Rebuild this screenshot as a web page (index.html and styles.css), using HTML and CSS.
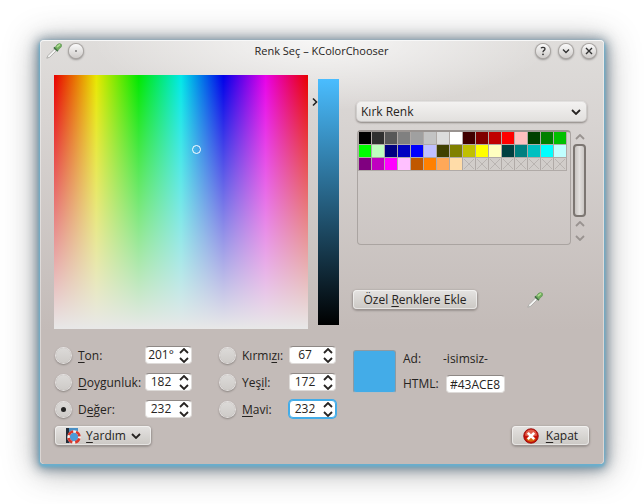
FILE: index.html
```html
<!DOCTYPE html>
<html lang="tr">
<head>
<meta charset="utf-8">
<title>Renk Seç – KColorChooser</title>
<link rel="stylesheet" href="styles.css">
</head>
<body>
<svg class="defs" width="0" height="0" aria-hidden="true">
  <symbol id="picker" viewBox="0 0 16 16">
    <path d="M.8 15.200 2 12.500 8.500 6l1.800 1.800L3.800 14.200z" fill="#f4f4f3" stroke="#a3a3a0" stroke-width=".8"/>
    <path d="M7.300 4.900 8.600 3.700 12.500 7.500 11.400 8.700z" fill="#3d6b40"/>
    <path d="M9 4.500 11 1.800Q13.500-.4 15.300 1.200 16.600 3 14.300 5L11.800 7.200z" fill="#72ad5f" stroke="#558f4b" stroke-width=".5"/>
    <path d="M11.300 3.700 13.600 1.900" stroke="#b0df91" stroke-width="1.500" stroke-linecap="round"/>
  </symbol>
  <symbol id="down" viewBox="0 0 10 6">
    <path d="M1 1l4 4 4-4" fill="none" stroke="currentColor" stroke-width="1.800"/>
  </symbol>
  <symbol id="up" viewBox="0 0 10 6">
    <path d="M1 5l4-4 4 4" fill="none" stroke="currentColor" stroke-width="1.800"/>
  </symbol>
</svg>
<main class="window">
  <header class="titlebar">
    <div class="tools">
      <svg class="icon" aria-hidden="true"><use href="#picker"/></svg>
      <button class="round" aria-label="Masaüstü"><svg viewBox="0 0 14 14"><circle cx="7" cy="7" r=".8" fill="#333"/></svg></button>
    </div>
    <h1 class="title">Renk Seç – KColorChooser</h1>
    <div class="tools tools-end">
      <button class="round" aria-label="Yardım"><svg viewBox="0 0 14 14"><path d="M5 4.300Q5.500 3.300 7 3.300q2 0 2 1.600 0 .9-1.200 1.700-.8.600-.8 1.700" fill="none" stroke="#333" stroke-width="1.300"/><circle cx="7" cy="10.300" r=".9" fill="#333"/></svg></button>
      <button class="round" aria-label="Küçült"><svg viewBox="0 0 14 14"><path d="M4 5.500 7 8.500l3-3" fill="none" stroke="#333" stroke-width="1.400"/></svg></button>
      <button class="round" aria-label="Pencereyi kapat"><svg viewBox="0 0 14 14"><path d="M4 4l6 6m0-6-6 6" stroke="#333" stroke-width="1.400"/></svg></button>
    </div>
  </header>

  <section class="upper">
    <div class="spectrum"><span class="marker"></span></div>
    <div class="value">
      <svg class="pointer" viewBox="0 0 6 10" aria-hidden="true"><path d="M1 1.500l3.500 3.500L1 8.500" fill="none" stroke="#222" stroke-width="1.600"/></svg>
      <div class="value-bar"></div>
    </div>
    <div class="palette">
      <div class="combo">
        <select aria-label="Palet"><option>Kırk Renk</option></select>
        <svg class="chevron" aria-hidden="true"><use href="#down"/></svg>
      </div>
      <div class="list">
        <div class="frame"><div class="cells" id="cells"></div></div>
        <div class="scroll">
          <button aria-label="Yukarı"><svg class="chevron"><use href="#up"/></svg></button>
          <div class="thumb"></div>
          <button aria-label="Yukarı"><svg class="chevron"><use href="#up"/></svg></button>
          <button aria-label="Aşağı"><svg class="chevron"><use href="#down"/></svg></button>
        </div>
      </div>
      <div class="actions">
        <button class="push add"><span>Özel <u>R</u>enklere Ekle</span></button>
        <button class="pick" aria-label="Renk seç"><svg class="icon"><use href="#picker"/></svg></button>
      </div>
    </div>
  </section>

  <section class="lower">
    <div class="channels hsv">
      <input type="radio" name="mode" id="r-h"><label for="r-h"><u>T</u>on:</label>
      <div class="spin"><input type="text" value="201°" aria-label="Ton"><span class="steps"><button aria-label="Artır"><svg class="chevron"><use href="#up"/></svg></button><button aria-label="Azalt"><svg class="chevron"><use href="#down"/></svg></button></span></div>
      <input type="radio" name="mode" id="r-s"><label for="r-s"><u>D</u>oygunluk:</label>
      <div class="spin"><input type="text" value="182" aria-label="Doygunluk"><span class="steps"><button aria-label="Artır"><svg class="chevron"><use href="#up"/></svg></button><button aria-label="Azalt"><svg class="chevron"><use href="#down"/></svg></button></span></div>
      <input type="radio" name="mode" id="r-v" checked><label for="r-v">D<u>e</u>ğer:</label>
      <div class="spin"><input type="text" value="232" aria-label="Değer"><span class="steps"><button aria-label="Artır"><svg class="chevron"><use href="#up"/></svg></button><button aria-label="Azalt"><svg class="chevron"><use href="#down"/></svg></button></span></div>
    </div>
    <div class="channels rgb">
      <input type="radio" name="mode" id="r-r"><label for="r-r">Kırmı<u>z</u>ı:</label>
      <div class="spin"><input type="text" value="67" aria-label="Kırmızı"><span class="steps"><button aria-label="Artır"><svg class="chevron"><use href="#up"/></svg></button><button aria-label="Azalt"><svg class="chevron"><use href="#down"/></svg></button></span></div>
      <input type="radio" name="mode" id="r-g"><label for="r-g">Yeş<u>i</u>l:</label>
      <div class="spin"><input type="text" value="172" aria-label="Yeşil"><span class="steps"><button aria-label="Artır"><svg class="chevron"><use href="#up"/></svg></button><button aria-label="Azalt"><svg class="chevron"><use href="#down"/></svg></button></span></div>
      <input type="radio" name="mode" id="r-b"><label for="r-b"><u>M</u>avi:</label>
      <div class="spin active"><input type="text" value="232" aria-label="Mavi"><span class="steps"><button aria-label="Artır"><svg class="chevron"><use href="#up"/></svg></button><button aria-label="Azalt"><svg class="chevron"><use href="#down"/></svg></button></span></div>
    </div>
    <div class="current">
      <div class="swatch"></div>
      <div class="details">
        <span>Ad:</span><span>-isimsiz-</span>
        <label for="html">HTML:</label><input class="hex" id="html" type="text" value="#43ACE8">
      </div>
    </div>
  </section>

  <footer class="footer">
    <button class="push help">
      <svg class="icon" viewBox="0 0 16 16" aria-hidden="true"><path d="M1 0h12v15H1z" fill="#4a8fc4"/><path d="M1 0h3v15H1z" fill="#222c38"/><circle cx="9" cy="9" r="5.500" fill="#4d9bd8" stroke="#f8f1ef" stroke-width="2.600"/><circle cx="9" cy="9" r="5.500" fill="none" stroke="#d8382c" stroke-width="2.600" stroke-dasharray="5.640 3" stroke-dashoffset="-1.500"/></svg>
      <span><u>Y</u>ardım</span>
      <svg class="chevron" aria-hidden="true"><use href="#down"/></svg>
    </button>
    <button class="push close">
      <svg class="icon" viewBox="0 0 16 16" aria-hidden="true"><circle cx="8" cy="8" r="7.300" fill="#c80f08" stroke="#8e0906" stroke-width=".8"/><path d="M2 7.500a6 6 0 0 1 12 0Q8 9.500 2 7.500z" fill="#e0604c"/><path d="M3 10.500a5.500 5.500 0 0 0 10 0Q8 8.500 3 10.500z" fill="#d86a12"/><path d="M4.800 4.800l6.400 6.400m0-6.400-6.400 6.400" stroke="#fff" stroke-width="2.600"/></svg>
      <span><u>K</u>apat</span>
    </button>
  </footer>
</main>
<script src="script.js"></script>
</body>
</html>
```

FILE: styles.css
```css
* { box-sizing: border-box; }
body {
  margin: 0;
  padding: 40px;
  background: #fff;
  color: #262321;
  font: 12px/16px "Open Sans", "Noto Sans", sans-serif;
}
button, input, select { font: inherit; color: inherit; margin: 0; }
button { padding: 0; border: 0; background: none; }
u { text-decoration-thickness: 1px; text-underline-offset: 2px; text-decoration-skip-ink: none; }
.defs { position: absolute; }
.icon { width: 16px; height: 16px; flex: none; }
.chevron { width: 10px; height: 6px; flex: none; display: block; }

.window {
  padding: 0 14px 19px;
  border-radius: 4px;
  background:
    radial-gradient(ellipse 230px 70px at 50% 0, rgba(255,255,255,.75), rgba(255,255,255,0)) no-repeat,
    linear-gradient(#dfdddb, #d8d4d2 80px, #c3bbb8 290px);
  box-shadow:
    inset 0 1px #f8f8f8,
    inset 1px 0 rgba(255,255,255,.4),
    inset -1px 0 rgba(255,255,255,.4),
    0 2px 3px 1px #69b0cf,
    0 2px 12px 3px rgba(40,75,100,.6),
    0 4px 32px 4px rgba(60,60,60,.4);
}
.titlebar {
  display: grid;
  grid-template-columns: 1fr auto 1fr;
  align-items: center;
  height: 22px;
  margin: 0 -7px 13px -8px;
}
.tools { display: flex; gap: 7px; align-items: center; }
.tools-end { justify-content: flex-end; gap: 9px; }
.title { margin: 0; font-size: 11px; font-weight: 400; }
.round {
  width: 14px;
  height: 14px;
  border-radius: 50%;
  background: linear-gradient(#fafafa, #cfccca);
  box-shadow: 0 0 0 1px #aaa6a3, 0 1px 2px 1px rgba(0,0,0,.3);
}
.tools-end .round:last-child { margin-right: 1px; }
.round svg { display: block; width: 14px; height: 14px; }

.upper { display: flex; }
.spectrum {
  position: relative;
  width: 254px;
  height: 254px;
  background:
    linear-gradient(rgba(232,232,232,0), #e8e8e8),
    linear-gradient(90deg, #e80000, #e8e800, #00e800, #00e8e8, #0000e8, #e800e8, #e80000);
}
.marker {
  position: absolute;
  left: 138px;
  top: 70px;
  width: 9px;
  height: 9px;
  border: 1px solid #fff;
  border-radius: 50%;
}
.value { display: flex; margin: 4px 14px 4px 4px; }
.pointer { width: 6px; height: 10px; margin-top: 18px; }
.value-bar { width: 21px; background: linear-gradient(#4abdff, #000); }
.palette { flex: 1; min-width: 0; padding-top: 27px; }
.combo { position: relative; margin: 0 4px 9px; }
.combo select {
  display: block;
  width: 100%;
  height: 19px;
  padding: 0 4px;
  appearance: none;
  border: 0;
  border-radius: 4px;
  background: linear-gradient(#f3f2f1, #e2e0de);
  box-shadow: 0 0 0 1px rgba(255,255,255,.5), 0 1px 2px 1px #8b8582;
}
.combo .chevron { position: absolute; right: 5px; top: 7px; pointer-events: none; }
.list { display: flex; gap: 1px; height: 115px; margin: 0 3px 0 4px; }
.frame {
  flex: 1;
  border: 1px solid #aaa4a1;
  border-top: 2px solid #999390;
  border-radius: 4px;
}
.cells {
  display: grid;
  grid-template-columns: repeat(16, 12px);
  grid-auto-rows: 12px;
  gap: 1px;
  width: max-content;
  padding: 0 1px 1px;
  background: #b0aaa7;
}
.cell { display: block; }
.empty { background: #d1cdca; color: #b9b4b1; }
.empty svg { display: block; width: 12px; height: 12px; }
.scroll { width: 15px; display: flex; flex-direction: column; align-items: center; color: #999390; }
.scroll button { height: 14px; flex: none; }
.thumb {
  flex: 1;
  width: 13px;
  border: 2px solid #7c7672;
  border-radius: 4px;
  background: linear-gradient(90deg, #c8c4c1, #e2dfdd, #cbc7c4);
}
.actions { display: flex; align-items: center; margin-top: 45px; gap: 50px; }
.pick { height: 16px; }
.push {
  display: flex;
  align-items: center;
  justify-content: center;
  gap: 5px;
  height: 19px;
  border-radius: 4px;
  background: linear-gradient(#e5e3e1, #cbc8c4);
  box-shadow: inset 0 0 0 1px rgba(255,255,255,.5), 0 1px 2px 1px #9a9390;
}
.push span { padding-top: 1px; }
.add { width: 124px; }

.lower { display: flex; align-items: flex-start; margin-top: 17px; }
.channels {
  display: grid;
  grid-template-columns: 17px 61px 47px;
  grid-auto-rows: 18px;
  gap: 9px 6px;
  align-items: center;
}
.rgb { grid-template-columns: 17px 41px 47px; margin-left: 27px; }
.hsv { padding-left: 1px; }
.channels input[type="radio"] {
  display: grid;
  place-items: center;
  justify-self: center;
  appearance: none;
  width: 15px;
  height: 15px;
  border-radius: 50%;
  background: linear-gradient(#dcdad8, #cecbc8);
  box-shadow: 0 0 0 1px #e4e1e0, 0 1px 2px 1px #8a8380;
}
.channels input[type="radio"]:checked::before {
  content: "";
  width: 5px;
  height: 5px;
  border-radius: 50%;
  background: #222;
}
.channels label { white-space: nowrap; padding-top: 1px; }
.spin, .hex {
  height: 18px;
  border: 1px solid #dedbd9;
  border-top-color: #8e8885;
  border-radius: 4px;
  background: #fff;
}
.spin { display: flex; align-items: center; }
.spin input { width: 30px; height: 16px; padding: 0; border: 0; background: none; text-align: center; outline: 0; }
.active { border-color: #43ace8; box-shadow: 0 0 0 1px #43ace8; }
.steps { display: flex; flex-direction: column; gap: 3px; margin-left: 3px; }
.steps button { height: 6px; }
.current { display: flex; gap: 7px; margin-left: 17px; padding-top: 4px; }
.swatch {
  width: 43px;
  height: 43px;
  border: 1px solid #8c9aa3;
  border-bottom-color: #b8bcc0;
  border-radius: 3px;
  background: #43ace8;
}
.details {
  display: grid;
  grid-template-columns: 36px 62px;
  grid-template-rows: 18px 18px;
  gap: 7px 4px;
  align-items: center;
}
.details label { white-space: nowrap; }
.hex { width: 59px; padding: 0 3px; margin-left: 3px; }
.footer { display: flex; justify-content: space-between; margin-top: 8px; }
.help { width: 96px; margin-left: 1px; }
.close { width: 77px; gap: 7px; margin-right: 1px; }
```

FILE: script.js
```js
const colors = [
  "#000000", "#303030", "#585858", "#808080", "#a0a0a0", "#c3c3c3", "#dcdcdc", "#ffffff",
  "#400000", "#800000", "#c00000", "#ff0000", "#ffc0c0", "#004000", "#008000", "#00c000",
  "#00ff00", "#c0ffc0", "#000080", "#0000c0", "#0000ff", "#c0c0ff", "#404000", "#808000",
  "#c0c000", "#ffff00", "#ffffc0", "#004040", "#008080", "#00c0c0", "#00ffff", "#c0ffff",
  "#800080", "#c000c0", "#ff00ff", "#ffc0ff", "#c05800", "#ff8000", "#ffa858", "#ffdca8"
];
const cells = document.getElementById("cells");
for (let i = 0; i < 48; i++) {
  const cell = document.createElement("button");
  cell.className = "cell";
  if (colors[i]) {
    cell.style.background = colors[i];
    cell.setAttribute("aria-label", colors[i]);
  } else {
    cell.classList.add("empty");
    cell.setAttribute("aria-label", "Boş");
    cell.innerHTML = '<svg viewBox="0 0 12 12"><path d="M1 1l10 10M11 1 1 11" stroke="currentColor"/></svg>';
  }
  cells.append(cell);
}
```
